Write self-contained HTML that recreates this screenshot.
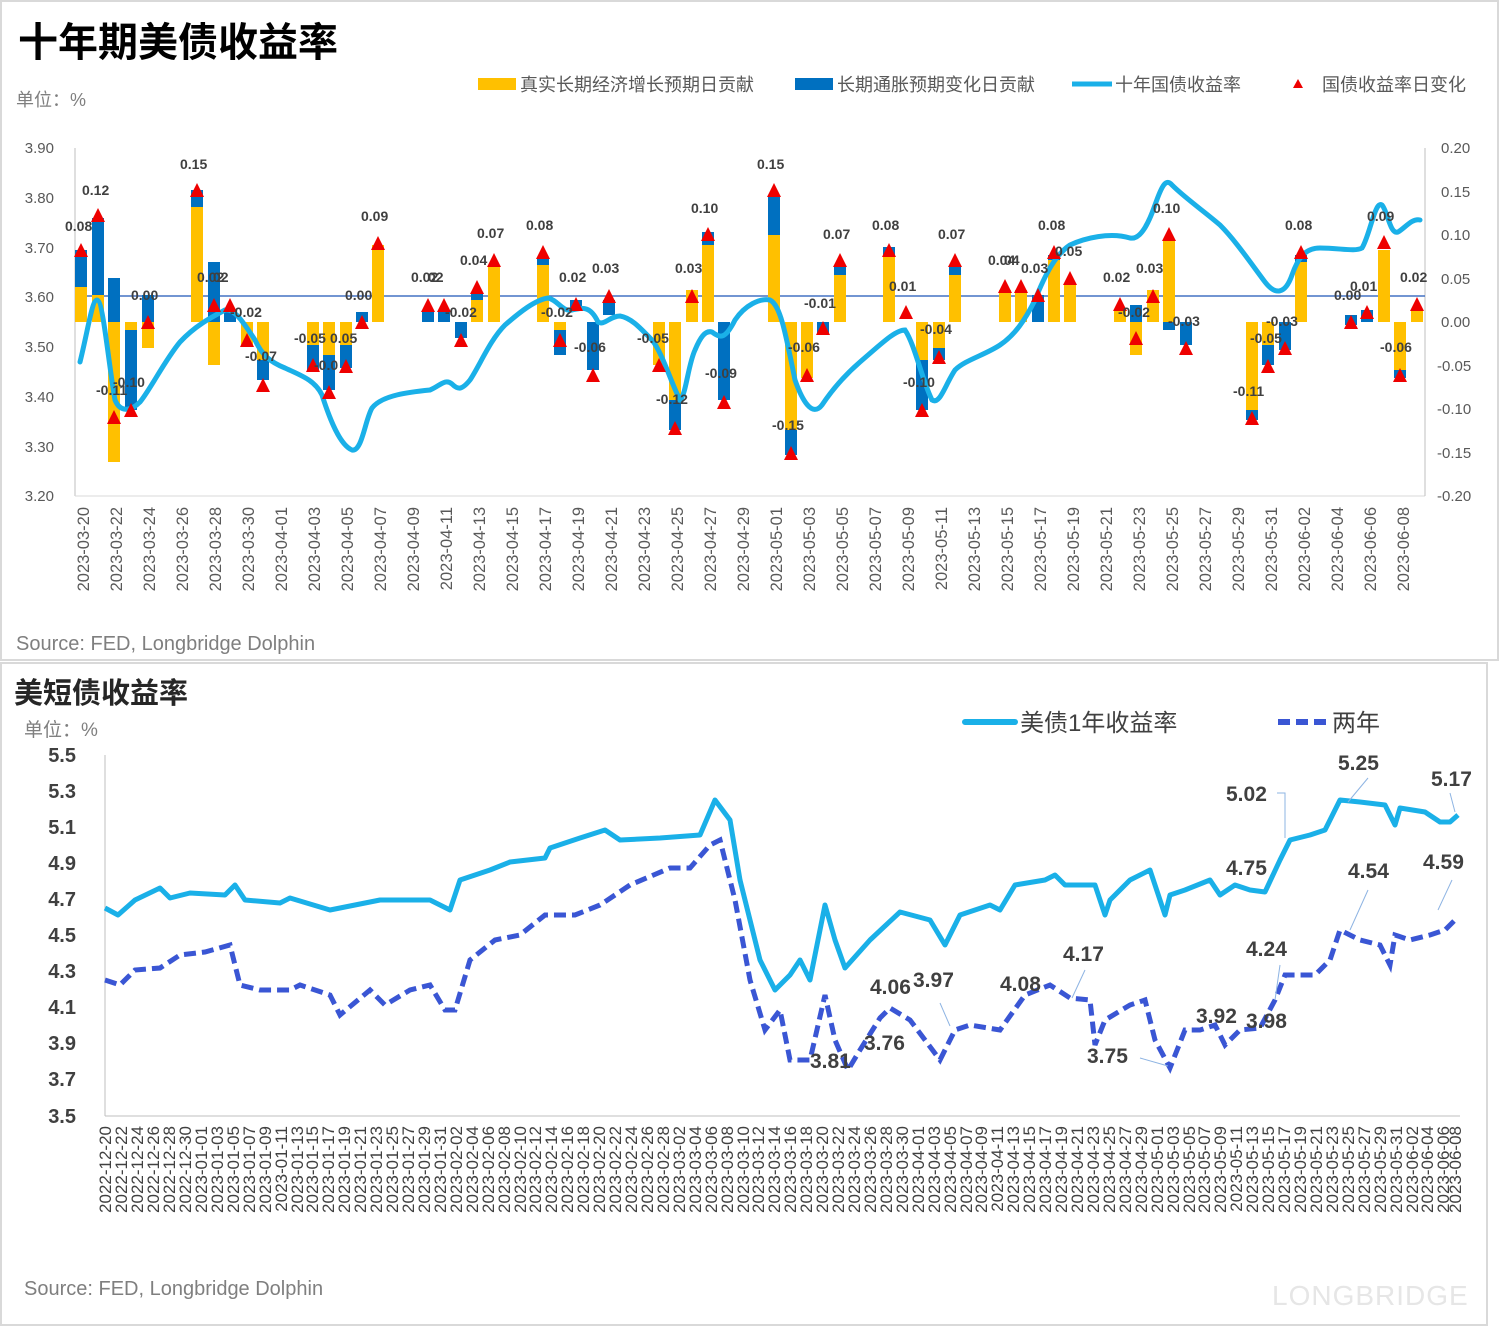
<!DOCTYPE html>
<html><head><meta charset="utf-8"><style>
body{margin:0;background:#fff;width:1500px;height:1327px;overflow:hidden;font-family:"Liberation Sans","Noto Sans CJK SC",sans-serif}
svg{position:absolute;left:0;top:0}
.ax{font-size:15px;fill:#595959}
.dl{font-size:16.5px;fill:#595959}
.vl{font-size:14px;font-weight:bold;fill:#404040}
.bl{font-size:20px;font-weight:bold;fill:#404040}
.dd{font-size:17px;fill:#404040}
</style></head><body>
<svg width="1500" height="1327" xmlns="http://www.w3.org/2000/svg">
<rect x="1" y="1" width="1497" height="659" fill="#fff" stroke="#d9d9d9" stroke-width="2"/>
<rect x="1" y="663" width="1486" height="662" fill="#fff" stroke="#d9d9d9" stroke-width="2"/>
<text x="18" y="56" font-size="40" font-weight="bold" fill="#000">十年期美债收益率</text>
<text x="16" y="106" font-size="18" fill="#7f7f7f">单位：%</text>
<!-- legend -->
<rect x="478" y="78" width="38" height="12" fill="#ffc000"/><text x="520" y="91" font-size="18" fill="#595959">真实长期经济增长预期日贡献</text>
<rect x="795" y="78" width="38" height="12" fill="#0070c0"/><text x="837" y="91" font-size="18" fill="#595959">长期通胀预期变化日贡献</text>
<line x1="1072" y1="84" x2="1112" y2="84" stroke="#1ab0e8" stroke-width="5"/><text x="1115" y="91" font-size="18" fill="#595959">十年国债收益率</text>
<polygon points="1298,79 1303,88 1293,88" fill="#e00"/><text x="1322" y="91" font-size="18" fill="#595959">国债收益率日变化</text>
<!-- axes -->
<line x1="75" y1="148" x2="75" y2="496" stroke="#bfbfbf"/>
<line x1="75" y1="496" x2="1425" y2="496" stroke="#d9d9d9"/>
<line x1="1425" y1="148" x2="1425" y2="496" stroke="#bfbfbf"/>
<line x1="75" y1="296" x2="1425" y2="296" stroke="#4472c4" stroke-width="1.5"/>
<g class="ax" text-anchor="end">
<text x="54" y="153">3.90</text><text x="54" y="203">3.80</text><text x="54" y="253">3.70</text><text x="54" y="302">3.60</text><text x="54" y="352">3.50</text><text x="54" y="402">3.40</text><text x="54" y="452">3.30</text><text x="54" y="501">3.20</text>
</g>
<g class="ax">
<text x="1441" y="153">0.20</text><text x="1441" y="197">0.15</text><text x="1441" y="240">0.10</text><text x="1441" y="284">0.05</text><text x="1441" y="327">0.00</text><text x="1437" y="371">-0.05</text><text x="1437" y="414">-0.10</text><text x="1437" y="458">-0.15</text><text x="1437" y="501">-0.20</text>
</g>
<!-- bars -->
<g fill="#ffc000">
<rect x="75" y="287" width="12" height="35"/><rect x="92" y="295" width="12" height="27"/><rect x="108" y="322" width="12" height="140"/><rect x="125" y="322" width="12" height="8"/><rect x="142" y="322" width="12" height="26"/><rect x="191" y="207" width="12" height="115"/><rect x="208" y="322" width="12" height="43"/><rect x="241" y="322" width="12" height="23"/><rect x="257" y="322" width="12" height="38"/><rect x="307" y="322" width="12" height="23"/><rect x="323" y="322" width="12" height="33"/><rect x="340" y="322" width="12" height="23"/><rect x="372" y="245" width="12" height="77"/><rect x="471" y="300" width="12" height="22"/><rect x="488" y="265" width="12" height="57"/><rect x="537" y="265" width="12" height="57"/><rect x="554" y="322" width="12" height="8"/><rect x="653" y="322" width="12" height="43"/><rect x="669" y="322" width="12" height="78"/><rect x="686" y="290" width="12" height="32"/><rect x="702" y="245" width="12" height="77"/><rect x="768" y="235" width="12" height="87"/><rect x="785" y="322" width="12" height="108"/><rect x="801" y="322" width="12" height="56"/><rect x="834" y="275" width="12" height="47"/><rect x="883" y="255" width="12" height="67"/><rect x="916" y="322" width="12" height="38"/><rect x="933" y="322" width="12" height="26"/><rect x="949" y="275" width="12" height="47"/><rect x="999" y="290" width="12" height="32"/><rect x="1015" y="290" width="12" height="32"/><rect x="1032" y="300" width="12" height="22"/><rect x="1048" y="260" width="12" height="62"/><rect x="1064" y="285" width="12" height="37"/><rect x="1114" y="310" width="12" height="12"/><rect x="1130" y="322" width="12" height="33"/><rect x="1147" y="290" width="12" height="32"/><rect x="1163" y="240" width="12" height="82"/><rect x="1246" y="322" width="12" height="88"/><rect x="1262" y="322" width="12" height="23"/><rect x="1295" y="262" width="12" height="60"/><rect x="1378" y="250" width="12" height="72"/><rect x="1394" y="322" width="12" height="48"/><rect x="1411" y="310" width="12" height="12"/>
</g>
<g fill="#0070c0">
<rect x="75" y="250" width="12" height="37"/><rect x="92" y="218" width="12" height="77"/><rect x="108" y="278" width="12" height="44"/><rect x="125" y="330" width="12" height="80"/><rect x="142" y="295" width="12" height="27"/><rect x="191" y="190" width="12" height="17"/><rect x="208" y="262" width="12" height="60"/><rect x="224" y="310" width="12" height="12"/><rect x="257" y="360" width="12" height="20"/><rect x="307" y="345" width="12" height="25"/><rect x="323" y="355" width="12" height="35"/><rect x="340" y="345" width="12" height="23"/><rect x="356" y="312" width="12" height="10"/><rect x="422" y="310" width="12" height="12"/><rect x="438" y="310" width="12" height="12"/><rect x="455" y="322" width="12" height="16"/><rect x="471" y="293" width="12" height="7"/><rect x="537" y="258" width="12" height="7"/><rect x="554" y="330" width="12" height="25"/><rect x="570" y="300" width="12" height="10"/><rect x="587" y="322" width="12" height="48"/><rect x="603" y="300" width="12" height="15"/><rect x="669" y="400" width="12" height="30"/><rect x="702" y="232" width="12" height="13"/><rect x="718" y="322" width="12" height="78"/><rect x="768" y="197" width="12" height="38"/><rect x="785" y="430" width="12" height="25"/><rect x="817" y="322" width="12" height="13"/><rect x="834" y="265" width="12" height="10"/><rect x="883" y="247" width="12" height="8"/><rect x="916" y="360" width="12" height="50"/><rect x="933" y="348" width="12" height="12"/><rect x="949" y="265" width="12" height="10"/><rect x="1032" y="295" width="12" height="27"/><rect x="1048" y="255" width="12" height="5"/><rect x="1130" y="305" width="12" height="17"/><rect x="1163" y="322" width="12" height="8"/><rect x="1180" y="322" width="12" height="23"/><rect x="1246" y="410" width="12" height="10"/><rect x="1262" y="345" width="12" height="20"/><rect x="1279" y="322" width="12" height="28"/><rect x="1295" y="255" width="12" height="7"/><rect x="1345" y="315" width="12" height="10"/><rect x="1361" y="310" width="12" height="12"/><rect x="1394" y="370" width="12" height="8"/>
</g>
<!-- 10y line -->
<path d="M80,362 C88,330 92,300 97,300 C103,300 108,360 115,400 C120,412 130,412 140,402 C150,390 165,360 180,342 C195,326 210,318 225,310 C235,308 245,325 255,340 C262,355 270,362 285,368 C300,375 315,380 322,395 C330,420 340,445 352,450 C362,452 365,420 372,408 C382,395 410,392 430,390 C440,386 445,378 452,384 C458,390 462,390 470,380 C480,365 490,340 505,325 C520,312 535,300 548,298 C558,300 562,312 572,310 C582,308 590,305 598,322 C604,326 610,316 620,316 C632,318 642,330 652,340 C662,352 672,385 680,400 C686,395 688,365 695,350 C700,338 705,330 712,332 C720,338 725,340 735,320 C745,305 760,298 770,300 C780,305 785,330 795,380 C802,400 812,418 822,405 C832,390 845,375 860,362 C880,345 895,330 905,330 C915,345 922,380 932,400 C940,405 945,385 955,370 C965,360 985,355 1000,345 C1015,335 1025,320 1035,300 C1045,275 1055,255 1070,245 C1085,238 1110,232 1130,238 C1140,240 1148,225 1155,205 C1162,185 1166,178 1172,185 C1185,198 1205,212 1220,225 C1235,240 1250,262 1265,282 C1275,295 1285,295 1292,275 C1298,258 1305,248 1320,248 C1340,248 1355,252 1362,248 C1370,235 1375,200 1382,205 C1388,212 1390,235 1398,232 C1405,228 1412,218 1420,220" fill="none" stroke="#1ab0e8" stroke-width="5" stroke-linecap="round"/>
<!-- triangles -->
<g fill="#e00">
<polygon points="81,243 88,257 74,257"/><polygon points="98,208 105,222 91,222"/><polygon points="114,410 121,424 107,424"/><polygon points="131,403 138,417 124,417"/><polygon points="148,315 155,329 141,329"/><polygon points="197,183 204,197 190,197"/><polygon points="214,298 221,312 207,312"/><polygon points="230,298 237,312 223,312"/><polygon points="247,333 254,347 240,347"/><polygon points="263,378 270,392 256,392"/><polygon points="313,358 320,372 306,372"/><polygon points="329,385 336,399 322,399"/><polygon points="346,359 353,373 339,373"/><polygon points="362,315 369,329 355,329"/><polygon points="378,236 385,250 371,250"/><polygon points="428,298 435,312 421,312"/><polygon points="444,298 451,312 437,312"/><polygon points="461,333 468,347 454,347"/><polygon points="477,280 484,294 470,294"/><polygon points="494,253 501,267 487,267"/><polygon points="543,245 550,259 536,259"/><polygon points="560,333 567,347 553,347"/><polygon points="576,297 583,311 569,311"/><polygon points="593,368 600,382 586,382"/><polygon points="609,289 616,303 602,303"/><polygon points="659,358 666,372 652,372"/><polygon points="675,421 682,435 668,435"/><polygon points="692,289 699,303 685,303"/><polygon points="708,227 715,241 701,241"/><polygon points="724,395 731,409 717,409"/><polygon points="774,183 781,197 767,197"/><polygon points="791,446 798,460 784,460"/><polygon points="807,368 814,382 800,382"/><polygon points="823,321 830,335 816,335"/><polygon points="840,253 847,267 833,267"/><polygon points="889,243 896,257 882,257"/><polygon points="906,305 913,319 899,319"/><polygon points="922,403 929,417 915,417"/><polygon points="939,350 946,364 932,364"/><polygon points="955,253 962,267 948,267"/><polygon points="1005,279 1012,293 998,293"/><polygon points="1021,279 1028,293 1014,293"/><polygon points="1038,288 1045,302 1031,302"/><polygon points="1054,245 1061,259 1047,259"/><polygon points="1070,271 1077,285 1063,285"/><polygon points="1120,297 1127,311 1113,311"/><polygon points="1136,331 1143,345 1129,345"/><polygon points="1153,289 1160,303 1146,303"/><polygon points="1169,227 1176,241 1162,241"/><polygon points="1186,341 1193,355 1179,355"/><polygon points="1252,411 1259,425 1245,425"/><polygon points="1268,359 1275,373 1261,373"/><polygon points="1285,341 1292,355 1278,355"/><polygon points="1301,245 1308,259 1294,259"/><polygon points="1351,315 1358,329 1344,329"/><polygon points="1367,305 1374,319 1360,319"/><polygon points="1384,235 1391,249 1377,249"/><polygon points="1400,368 1407,382 1393,382"/><polygon points="1417,297 1424,311 1410,311"/>
</g>
<!-- value labels -->
<g class="vl">
<text x="65" y="231">0.08</text><text x="82" y="195">0.12</text><text x="180" y="169">0.15</text><text x="197" y="282">0.02</text><text x="213" y="282">02</text><text x="131" y="300">0.00</text><text x="230" y="317">-0.02</text><text x="245" y="361">-0.07</text><text x="96" y="395">-0.11</text><text x="113" y="387">-0.10</text><text x="294" y="343">-0.05</text><text x="330" y="343">0.05</text><text x="314" y="370">-0.0</text><text x="361" y="221">0.09</text><text x="345" y="300">0.00</text><text x="411" y="282">0.02</text><text x="428" y="282">02</text><text x="445" y="317">-0.02</text><text x="460" y="265">0.04</text><text x="477" y="238">0.07</text><text x="526" y="230">0.08</text><text x="541" y="317">-0.02</text><text x="559" y="282">0.02</text><text x="592" y="273">0.03</text><text x="574" y="352">-0.06</text><text x="637" y="343">-0.05</text><text x="656" y="404">-0.12</text><text x="675" y="273">0.03</text><text x="691" y="213">0.10</text><text x="705" y="378">-0.09</text><text x="757" y="169">0.15</text><text x="772" y="430">-0.15</text><text x="788" y="352">-0.06</text><text x="804" y="308">-0.01</text><text x="823" y="239">0.07</text><text x="872" y="230">0.08</text><text x="889" y="291">0.01</text><text x="920" y="334">-0.04</text><text x="903" y="387">-0.10</text><text x="938" y="239">0.07</text><text x="988" y="265">0.04</text><text x="1004" y="265">04</text><text x="1021" y="273">0.03</text><text x="1038" y="230">0.08</text><text x="1055" y="256">0.05</text><text x="1103" y="282">0.02</text><text x="1118" y="317">-0.02</text><text x="1136" y="273">0.03</text><text x="1153" y="213">0.10</text><text x="1168" y="326">-0.03</text><text x="1233" y="396">-0.11</text><text x="1250" y="343">-0.05</text><text x="1266" y="326">-0.03</text><text x="1285" y="230">0.08</text><text x="1334" y="300">0.00</text><text x="1350" y="291">0.01</text><text x="1367" y="221">0.09</text><text x="1380" y="352">-0.06</text><text x="1400" y="282">0.02</text>
</g>
<!-- top date labels -->
<g class="dl" text-anchor="end">
<text transform="translate(89,507) rotate(-90)">2023-03-20</text><text transform="translate(122,507) rotate(-90)">2023-03-22</text><text transform="translate(155,507) rotate(-90)">2023-03-24</text><text transform="translate(188,507) rotate(-90)">2023-03-26</text><text transform="translate(221,507) rotate(-90)">2023-03-28</text><text transform="translate(254,507) rotate(-90)">2023-03-30</text><text transform="translate(287,507) rotate(-90)">2023-04-01</text><text transform="translate(320,507) rotate(-90)">2023-04-03</text><text transform="translate(353,507) rotate(-90)">2023-04-05</text><text transform="translate(386,507) rotate(-90)">2023-04-07</text><text transform="translate(419,507) rotate(-90)">2023-04-09</text><text transform="translate(452,507) rotate(-90)">2023-04-11</text><text transform="translate(485,507) rotate(-90)">2023-04-13</text><text transform="translate(518,507) rotate(-90)">2023-04-15</text><text transform="translate(551,507) rotate(-90)">2023-04-17</text><text transform="translate(584,507) rotate(-90)">2023-04-19</text><text transform="translate(617,507) rotate(-90)">2023-04-21</text><text transform="translate(650,507) rotate(-90)">2023-04-23</text><text transform="translate(683,507) rotate(-90)">2023-04-25</text><text transform="translate(716,507) rotate(-90)">2023-04-27</text><text transform="translate(749,507) rotate(-90)">2023-04-29</text><text transform="translate(782,507) rotate(-90)">2023-05-01</text><text transform="translate(815,507) rotate(-90)">2023-05-03</text><text transform="translate(848,507) rotate(-90)">2023-05-05</text><text transform="translate(881,507) rotate(-90)">2023-05-07</text><text transform="translate(914,507) rotate(-90)">2023-05-09</text><text transform="translate(947,507) rotate(-90)">2023-05-11</text><text transform="translate(980,507) rotate(-90)">2023-05-13</text><text transform="translate(1013,507) rotate(-90)">2023-05-15</text><text transform="translate(1046,507) rotate(-90)">2023-05-17</text><text transform="translate(1079,507) rotate(-90)">2023-05-19</text><text transform="translate(1112,507) rotate(-90)">2023-05-21</text><text transform="translate(1145,507) rotate(-90)">2023-05-23</text><text transform="translate(1178,507) rotate(-90)">2023-05-25</text><text transform="translate(1211,507) rotate(-90)">2023-05-27</text><text transform="translate(1244,507) rotate(-90)">2023-05-29</text><text transform="translate(1277,507) rotate(-90)">2023-05-31</text><text transform="translate(1310,507) rotate(-90)">2023-06-02</text><text transform="translate(1343,507) rotate(-90)">2023-06-04</text><text transform="translate(1376,507) rotate(-90)">2023-06-06</text><text transform="translate(1409,507) rotate(-90)">2023-06-08</text>
</g>
<text x="16" y="650" font-size="20" fill="#7f7f7f">Source: FED, Longbridge Dolphin</text>

<!-- ===== bottom chart ===== -->
<text x="14" y="703" font-size="29" font-weight="bold" fill="#262626">美短债收益率</text>
<text x="24" y="736" font-size="19" fill="#7f7f7f">单位：%</text>
<line x1="965" y1="722" x2="1015" y2="722" stroke="#1ab0e8" stroke-width="6" stroke-linecap="round"/><text x="1020" y="731" font-size="24" fill="#404040">美债1年收益率</text>
<line x1="1278" y1="722" x2="1330" y2="722" stroke="#3a56d4" stroke-width="6" stroke-dasharray="12,6"/><text x="1332" y="731" font-size="24" fill="#404040">两年</text>
<line x1="105" y1="755" x2="105" y2="1116" stroke="#bfbfbf"/>
<line x1="105" y1="1116" x2="1460" y2="1116" stroke="#bfbfbf"/>
<g class="bl" text-anchor="end">
<text x="76" y="762">5.5</text><text x="76" y="798">5.3</text><text x="76" y="834">5.1</text><text x="76" y="870">4.9</text><text x="76" y="906">4.7</text><text x="76" y="942">4.5</text><text x="76" y="978">4.3</text><text x="76" y="1014">4.1</text><text x="76" y="1050">3.9</text><text x="76" y="1086">3.7</text><text x="76" y="1123">3.5</text>
</g>
<path d="M105,908 L118,915 L135,900 L160,888 L170,898 L190,893 L225,895 L235,885 L245,900 L280,903 L290,898 L330,910 L380,900 L430,900 L450,910 L460,880 L490,870 L510,862 L545,858 L550,848 L580,838 L605,830 L620,840 L660,838 L700,835 L715,800 L730,820 L740,880 L760,960 L775,990 L790,975 L800,960 L810,980 L825,905 L835,940 L845,968 L870,940 L900,912 L930,920 L945,945 L960,915 L990,905 L1000,910 L1015,885 L1045,880 L1055,875 L1065,885 L1095,885 L1105,915 L1110,900 L1130,880 L1150,870 L1165,915 L1170,895 L1185,890 L1210,880 L1220,895 L1235,885 L1250,890 L1265,892 L1280,860 L1290,840 L1310,835 L1325,830 L1340,800 L1360,802 L1385,805 L1395,825 L1400,808 L1425,812 L1440,822 L1450,822 L1458,815" fill="none" stroke="#1ab0e8" stroke-width="5" stroke-linejoin="round"/>
<path d="M105,980 L120,985 L135,970 L160,968 L180,955 L205,952 L230,945 L240,985 L260,990 L290,990 L300,985 L330,995 L340,1015 L370,990 L385,1005 L410,990 L430,985 L445,1010 L455,1010 L470,960 L495,940 L520,935 L545,915 L575,915 L600,905 L630,885 L670,868 L690,868 L710,845 L720,840 L735,900 L750,980 L765,1030 L780,1010 L790,1060 L810,1060 L825,995 L835,1040 L848,1070 L860,1050 L880,1018 L890,1008 L910,1020 L925,1040 L940,1060 L955,1030 L970,1025 L1000,1030 L1025,995 L1050,985 L1070,998 L1090,1000 L1095,1045 L1105,1020 L1130,1005 L1145,1000 L1155,1040 L1170,1068 L1185,1030 L1200,1030 L1215,1025 L1225,1045 L1240,1030 L1260,1028 L1275,1000 L1285,975 L1315,975 L1330,960 L1340,930 L1360,940 L1380,945 L1390,965 L1395,935 L1410,940 L1430,935 L1445,930 L1455,920" fill="none" stroke="#3a56d4" stroke-width="5" stroke-dasharray="12,6"/>
<g stroke="#8eb4e3" fill="none" stroke-width="1">
<path d="M1277,793 L1285,793 L1285,838"/><path d="M1348,802 L1368,778"/><path d="M1450,793 L1455,812"/><path d="M1350,930 L1368,890"/><path d="M1438,910 L1452,880"/><path d="M1280,965 L1275,1000"/><path d="M1072,998 L1085,970"/><path d="M950,1026 L940,1003"/><path d="M1140,1058 L1168,1066"/>
</g>
<g font-size="21" font-weight="bold" fill="#404040">
<text x="1226" y="801">5.02</text><text x="1338" y="770">5.25</text><text x="1431" y="786">5.17</text><text x="1226" y="875">4.75</text><text x="1348" y="878">4.54</text><text x="1423" y="869">4.59</text><text x="1063" y="961">4.17</text><text x="1246" y="956">4.24</text><text x="870" y="994">4.06</text><text x="913" y="987">3.97</text><text x="1000" y="991">4.08</text><text x="864" y="1050">3.76</text><text x="810" y="1068">3.81</text><text x="1087" y="1063">3.75</text><text x="1196" y="1023">3.92</text><text x="1246" y="1028">3.98</text>
</g>
<g class="dd" text-anchor="end">
<text transform="translate(111,1126) rotate(-90)">2022-12-20</text><text transform="translate(127,1126) rotate(-90)">2022-12-22</text><text transform="translate(143,1126) rotate(-90)">2022-12-24</text><text transform="translate(159,1126) rotate(-90)">2022-12-26</text><text transform="translate(175,1126) rotate(-90)">2022-12-28</text><text transform="translate(191,1126) rotate(-90)">2022-12-30</text><text transform="translate(207,1126) rotate(-90)">2023-01-01</text><text transform="translate(223,1126) rotate(-90)">2023-01-03</text><text transform="translate(239,1126) rotate(-90)">2023-01-05</text><text transform="translate(255,1126) rotate(-90)">2023-01-07</text><text transform="translate(271,1126) rotate(-90)">2023-01-09</text><text transform="translate(287,1126) rotate(-90)">2023-01-11</text><text transform="translate(303,1126) rotate(-90)">2023-01-13</text><text transform="translate(318,1126) rotate(-90)">2023-01-15</text><text transform="translate(334,1126) rotate(-90)">2023-01-17</text><text transform="translate(350,1126) rotate(-90)">2023-01-19</text><text transform="translate(366,1126) rotate(-90)">2023-01-21</text><text transform="translate(382,1126) rotate(-90)">2023-01-23</text><text transform="translate(398,1126) rotate(-90)">2023-01-25</text><text transform="translate(414,1126) rotate(-90)">2023-01-27</text><text transform="translate(430,1126) rotate(-90)">2023-01-29</text><text transform="translate(446,1126) rotate(-90)">2023-01-31</text><text transform="translate(462,1126) rotate(-90)">2023-02-02</text><text transform="translate(478,1126) rotate(-90)">2023-02-04</text><text transform="translate(494,1126) rotate(-90)">2023-02-06</text><text transform="translate(510,1126) rotate(-90)">2023-02-08</text><text transform="translate(526,1126) rotate(-90)">2023-02-10</text><text transform="translate(541,1126) rotate(-90)">2023-02-12</text><text transform="translate(557,1126) rotate(-90)">2023-02-14</text><text transform="translate(573,1126) rotate(-90)">2023-02-16</text><text transform="translate(589,1126) rotate(-90)">2023-02-18</text><text transform="translate(605,1126) rotate(-90)">2023-02-20</text><text transform="translate(621,1126) rotate(-90)">2023-02-22</text><text transform="translate(637,1126) rotate(-90)">2023-02-24</text><text transform="translate(653,1126) rotate(-90)">2023-02-26</text><text transform="translate(669,1126) rotate(-90)">2023-02-28</text><text transform="translate(685,1126) rotate(-90)">2023-03-02</text><text transform="translate(701,1126) rotate(-90)">2023-03-04</text><text transform="translate(717,1126) rotate(-90)">2023-03-06</text><text transform="translate(733,1126) rotate(-90)">2023-03-08</text><text transform="translate(749,1126) rotate(-90)">2023-03-10</text><text transform="translate(764,1126) rotate(-90)">2023-03-12</text><text transform="translate(780,1126) rotate(-90)">2023-03-14</text><text transform="translate(796,1126) rotate(-90)">2023-03-16</text><text transform="translate(812,1126) rotate(-90)">2023-03-18</text><text transform="translate(828,1126) rotate(-90)">2023-03-20</text><text transform="translate(844,1126) rotate(-90)">2023-03-22</text><text transform="translate(860,1126) rotate(-90)">2023-03-24</text><text transform="translate(876,1126) rotate(-90)">2023-03-26</text><text transform="translate(892,1126) rotate(-90)">2023-03-28</text><text transform="translate(908,1126) rotate(-90)">2023-03-30</text><text transform="translate(924,1126) rotate(-90)">2023-04-01</text><text transform="translate(940,1126) rotate(-90)">2023-04-03</text><text transform="translate(956,1126) rotate(-90)">2023-04-05</text><text transform="translate(972,1126) rotate(-90)">2023-04-07</text><text transform="translate(987,1126) rotate(-90)">2023-04-09</text><text transform="translate(1003,1126) rotate(-90)">2023-04-11</text><text transform="translate(1019,1126) rotate(-90)">2023-04-13</text><text transform="translate(1035,1126) rotate(-90)">2023-04-15</text><text transform="translate(1051,1126) rotate(-90)">2023-04-17</text><text transform="translate(1067,1126) rotate(-90)">2023-04-19</text><text transform="translate(1083,1126) rotate(-90)">2023-04-21</text><text transform="translate(1099,1126) rotate(-90)">2023-04-23</text><text transform="translate(1115,1126) rotate(-90)">2023-04-25</text><text transform="translate(1131,1126) rotate(-90)">2023-04-27</text><text transform="translate(1147,1126) rotate(-90)">2023-04-29</text><text transform="translate(1163,1126) rotate(-90)">2023-05-01</text><text transform="translate(1179,1126) rotate(-90)">2023-05-03</text><text transform="translate(1195,1126) rotate(-90)">2023-05-05</text><text transform="translate(1210,1126) rotate(-90)">2023-05-07</text><text transform="translate(1226,1126) rotate(-90)">2023-05-09</text><text transform="translate(1242,1126) rotate(-90)">2023-05-11</text><text transform="translate(1258,1126) rotate(-90)">2023-05-13</text><text transform="translate(1274,1126) rotate(-90)">2023-05-15</text><text transform="translate(1290,1126) rotate(-90)">2023-05-17</text><text transform="translate(1306,1126) rotate(-90)">2023-05-19</text><text transform="translate(1322,1126) rotate(-90)">2023-05-21</text><text transform="translate(1338,1126) rotate(-90)">2023-05-23</text><text transform="translate(1354,1126) rotate(-90)">2023-05-25</text><text transform="translate(1370,1126) rotate(-90)">2023-05-27</text><text transform="translate(1386,1126) rotate(-90)">2023-05-29</text><text transform="translate(1402,1126) rotate(-90)">2023-05-31</text><text transform="translate(1418,1126) rotate(-90)">2023-06-02</text><text transform="translate(1433,1126) rotate(-90)">2023-06-04</text><text transform="translate(1449,1126) rotate(-90)">2023-06-06</text><text transform="translate(1461,1126) rotate(-90)">2023-06-08</text>
</g>
<text x="24" y="1295" font-size="20" fill="#7f7f7f">Source: FED, Longbridge Dolphin</text>
<text x="1272" y="1305" font-size="28" fill="#e6e6e6" letter-spacing="1">LONGBRIDGE</text>
</svg>
</body></html>
